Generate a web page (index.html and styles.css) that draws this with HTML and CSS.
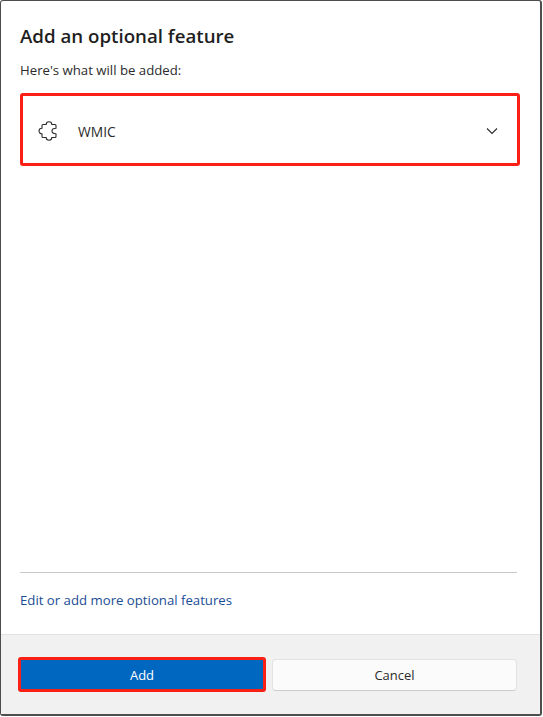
FILE: index.html
```html
<!DOCTYPE html>
<html lang="en">
<head>
  <meta charset="UTF-8" />
  <title>Add an optional feature</title>
  <link rel="stylesheet" href="styles.css">
</head>
<body>
  <div class="dialog">
    <div class="content">
      <h1 class="title">Add an optional feature</h1>
      <p class="subtitle">Here's what will be added:</p>

      <div class="feature marked">
        <svg class="puzzle" width="20" height="20" viewBox="0 0 20 20" fill="none" stroke="#2b2b2b" stroke-width="1.1" stroke-linejoin="round">
          <path d="M8.2 3.5 C8.2 1.6 9.5 .8 11 .8 C12.5 .8 13.8 1.6 13.8 3.5 L17 3.5 Q18 3.5 18 4.5 L18 7.3 C15.5 7.3 14 8.4 14 10 C14 11.6 15.5 12.7 18 12.7 L18 15.5 Q18 16.5 17 16.5 L13.8 16.5 C13.8 18.4 12.5 19.2 11 19.2 C9.5 19.2 8.2 18.4 8.2 16.5 L5 16.5 Q4 16.5 4 15.5 L4 12.8 C2.2 12.8 1 11.6 1 10 C1 8.4 2.2 7.2 4 7.2 L4 4.5 Q4 3.5 5 3.5 Z"/>
        </svg>
        <span class="feature-name">WMIC</span>
        <svg class="chevron" width="12" height="8" viewBox="0 0 12 8" fill="none" stroke="#2b2b2b" stroke-width="1.1">
          <path d="M1 1.5 L6 6.5 L11 1.5"/>
        </svg>
      </div>

      <div class="spacer"></div>

      <div class="divider"></div>
      <a class="more-link" href="#">Edit or add more optional features</a>
    </div>

    <div class="footer">
      <button class="btn btn-primary marked">Add</button>
      <button class="btn btn-cancel">Cancel</button>
    </div>
  </div>
</body>
</html>
```

FILE: styles.css
```css
body {
  margin: 0;
  background: #fff;
  font-family: "Open Sans", "Noto Sans", sans-serif;
  color: #1f1f1f;
}

.dialog {
  box-sizing: border-box;
  width: 542px;
  height: 716px;
  display: flex;
  flex-direction: column;
  background: #fff;
  border: 1px solid #4d4d4d;
  border-width: 1px 2px 2px 1px;
  border-radius: 3px;
}

.content {
  flex: 1;
  display: flex;
  flex-direction: column;
  padding: 22px 23px 0 19px;
}

.title {
  margin: 0;
  font-size: 18.7px;
  line-height: 26px;
  font-weight: 600;
}

.subtitle {
  margin: 12px 0 0;
  font-size: 13.2px;
  line-height: 18px;
  color: #2b2b2b;
}

.marked {
  border: 3px solid #fb2016;
  border-radius: 3px;
}

.feature {
  box-sizing: border-box;
  height: 73px;
  margin: 14px -3px 0 0;
  display: flex;
  align-items: center;
  padding: 3px 19px 0 15px;
}

.puzzle {
  flex: none;
}

.feature-name {
  margin-left: 20px;
  flex: 1;
  font-size: 13.8px;
  color: #2b2b2b;
}

.spacer {
  flex: 1;
}

.divider {
  height: 1px;
  background: #c9c9c9;
}

.more-link {
  margin: 18px 0 24px;
  font-size: 13.2px;
  line-height: 19px;
  color: #1a4d96;
  text-decoration: none;
}

.footer {
  box-sizing: border-box;
  height: 80px;
  display: flex;
  align-items: center;
  gap: 6px;
  padding: 0 23px 0 17px;
  background: #f1f1f1;
  border-top: 1px solid #e2e2e2;
}

.btn {
  font-family: inherit;
  font-size: 13px;
  color: #2b2b2b;
}

.btn-primary {
  box-sizing: border-box;
  width: 248px;
  height: 35px;
  background: #0067c0;
  color: #fff;
}

.btn-cancel {
  flex: 1;
  height: 32px;
  background: #fbfbfb;
  border: 1px solid #e3e3e3;
  border-bottom-color: #cdcdcd;
  border-radius: 4px;
}
```
